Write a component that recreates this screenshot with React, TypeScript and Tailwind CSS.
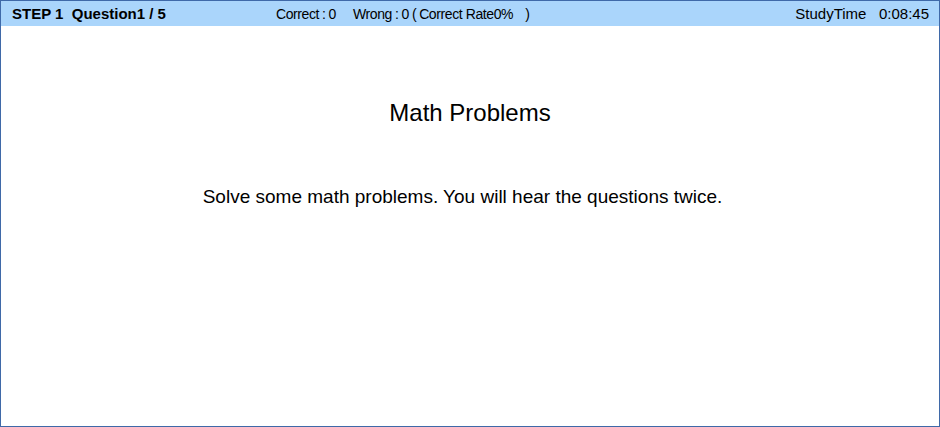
import React from 'react';

const App: React.FC = () => {
    return (
        <div className="w-[940px] h-[427px] bg-white border border-[#3f69a8] flex flex-col font-['Liberation_Sans','Noto_Sans_CJK_JP',sans-serif] text-black">
            <div className="h-[25px] bg-[#aad5fb] flex items-center leading-none shrink-0">
                <div className="w-[275px] pl-[11px] text-[15px] font-bold whitespace-pre">STEP 1  Question1 / 5</div>
                <div className="flex items-center text-[14px] tracking-[-0.4px] whitespace-pre">
                    <span>Correct</span>
                    <span className="mx-[3px]">:</span>
                    <span>0</span>
                    <span className="ml-[17px]">Wrong</span>
                    <span className="mx-[3px]">:</span>
                    <span>0</span>
                    <span className="ml-[3px] mr-[3px]">(</span>
                    <span>Correct Rate0%</span>
                    <span className="ml-[12px]">)</span>
                </div>
                <div className="ml-auto pr-[10px] text-[15px] whitespace-pre">StudyTime   0:08:45</div>
            </div>
            <div className="flex flex-col items-center">
                <h1 className="mt-[73px] text-[24px] leading-[27px]">Math Problems</h1>
                <p className="mt-[60px] mr-[15px] text-[19px] leading-[22px]">Solve some math problems. You will hear the questions twice.</p>
            </div>
        </div>
    );
};

export default App;
